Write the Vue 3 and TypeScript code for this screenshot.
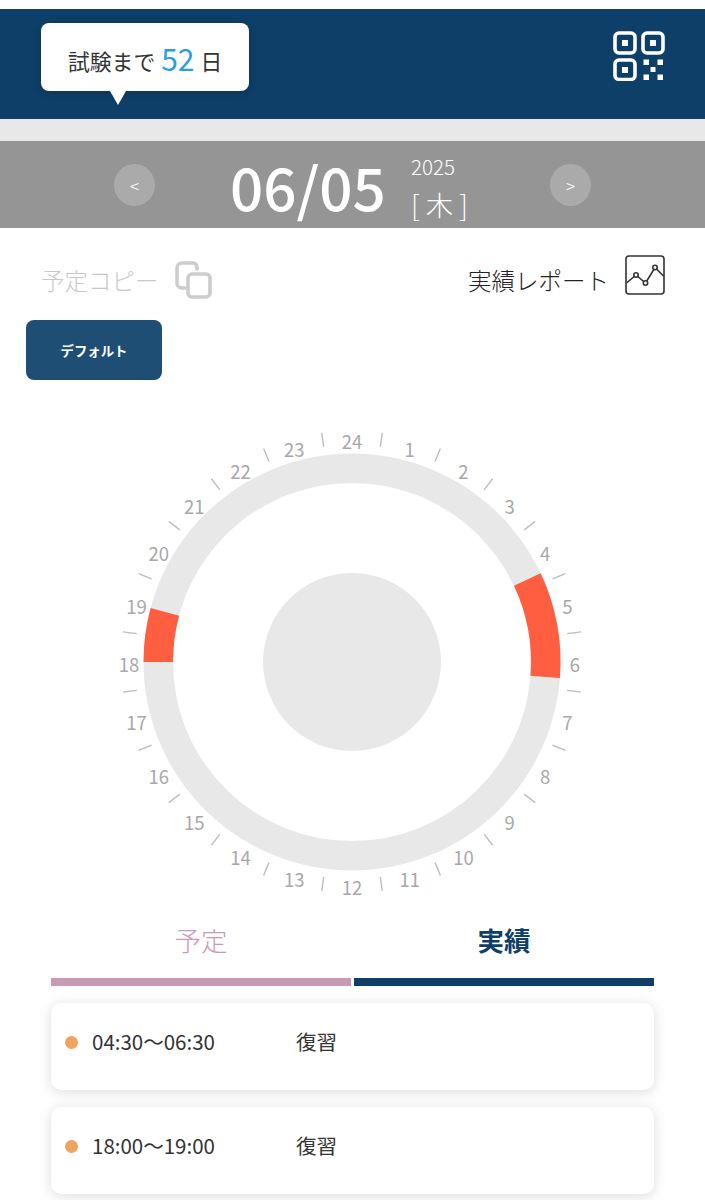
<script setup lang="ts">
const cx = 352
const cy = 240
const rOuter = 208.5
const rInner = 179

function polar(r: number, deg: number): { x: number; y: number } {
  const a = (deg * Math.PI) / 180
  return { x: cx + r * Math.sin(a), y: cy - r * Math.cos(a) }
}

function arc(start: number, end: number): string {
  const a = polar(rOuter, start)
  const b = polar(rOuter, end)
  const c = polar(rInner, end)
  const d = polar(rInner, start)
  return `M${a.x} ${a.y}A${rOuter} ${rOuter} 0 0 1 ${b.x} ${b.y}L${c.x} ${c.y}A${rInner} ${rInner} 0 0 0 ${d.x} ${d.y}Z`
}

const hours = Array.from({ length: 24 }, (_, i) => {
  const h = i + 1
  const deg = h * 15
  const p = polar(223, deg)
  const t1 = polar(217, deg - 7.5)
  const t2 = polar(231, deg - 7.5)
  return { h, x: p.x, y: p.y + 2, t1, t2 }
})

const segments = [arc(64.8, 94.4), arc(270, 285)]
const entries = [
  { time: '04:30〜06:30', label: '復習' },
  { time: '18:00〜19:00', label: '復習' },
]
</script>

<template>
  <div class="page">
    <header class="top">
      <div class="bubble">
        <span>試験まで</span>
        <span class="count">52</span>
        <span>日</span>
      </div>
      <svg class="qr" width="52" height="50" viewBox="0 0 52 50" fill="none">
        <g stroke="#fff" stroke-width="3.6">
          <rect x="2" y="2" width="20" height="20" rx="4" />
          <rect x="30" y="2" width="20" height="20" rx="4" />
          <rect x="2" y="29" width="20" height="19.5" rx="4" />
        </g>
        <g fill="#fff">
          <rect x="9" y="9" width="6" height="6" />
          <rect x="37" y="9" width="6" height="6" />
          <rect x="9" y="36" width="6" height="6" />
          <rect x="30.5" y="28.5" width="5.5" height="5.5" />
          <rect x="44.5" y="28.5" width="5.5" height="5.5" />
          <rect x="37.5" y="36" width="5" height="5" />
          <rect x="30.5" y="43.5" width="5.5" height="5.5" />
          <rect x="44.5" y="43.5" width="5.5" height="5.5" />
        </g>
      </svg>
    </header>
    <div class="strip"></div>

    <section class="datebar">
      <button class="nav">&lt;</button>
      <div class="date">06/05</div>
      <div class="meta">
        <div class="year">2025</div>
        <div class="dow">[ 木 ]</div>
      </div>
      <button class="nav next">&gt;</button>
    </section>

    <section class="tools">
      <div class="tool muted">
        <span>予定コピー</span>
        <svg width="38" height="38" viewBox="0 0 38 38" fill="none" stroke="#cdcdcd" stroke-width="3.6">
          <path d="M10 27H7a5 5 0 0 1-5-5V7a5 5 0 0 1 5-5h11a4 4 0 0 1 4 4v2" stroke-linecap="round" />
          <rect x="13" y="13" width="22" height="23" rx="4" />
        </svg>
      </div>
      <div class="tool">
        <span>実績レポート</span>
        <svg class="chart" width="40" height="40" viewBox="0 0 40 40" fill="none" stroke="#333" stroke-width="1.6">
          <rect x="1" y="1" width="38" height="38" rx="3" />
          <path d="M1.5 28L11 20L20.5 28L30 12.5L38.5 21" />
          <circle cx="11" cy="20" r="2.2" fill="#fff" />
          <circle cx="20.5" cy="28" r="2.2" fill="#fff" />
          <circle cx="30" cy="12.5" r="2.2" fill="#fff" />
        </svg>
      </div>
    </section>

    <button class="preset">デフォルト</button>

    <svg class="dial" width="705" height="480" viewBox="0 0 705 480">
      <circle :cx="cx" :cy="cy" r="193.75" fill="none" stroke="#e8e8e8" stroke-width="29.5" />
      <circle :cx="cx" :cy="cy" r="89" fill="#e8e8e8" />
      <path v-for="d in segments" :key="d" :d="d" fill="#ff5e40" />
      <g v-for="item in hours" :key="item.h">
        <line :x1="item.t1.x" :y1="item.t1.y" :x2="item.t2.x" :y2="item.t2.y" stroke="#bdbdbd" stroke-width="1.4" />
        <text class="hour" :x="item.x" :y="item.y" text-anchor="middle" dominant-baseline="central">{{ item.h }}</text>
      </g>
    </svg>

    <nav class="tabs">
      <div class="tab plan">予定</div>
      <div class="tab actual">実績</div>
    </nav>

    <ul class="list">
      <li v-for="e in entries" :key="e.time" class="card">
        <span class="dot"></span>
        <span class="time">{{ e.time }}</span>
        <span class="label">{{ e.label }}</span>
      </li>
    </ul>
  </div>
</template>

<style>
html, body { background: #fff; }
</style>

<style scoped>
.page {
  width: 705px;
  height: 1200px;
  overflow: hidden;
  padding-top: 9px;
  box-sizing: border-box;
  background: #fff;
  font-family: "Noto Sans CJK JP", "Noto Sans", sans-serif;
  color: #333;
}
.top {
  height: 110px;
  background: #0e3f68;
  display: flex;
  align-items: flex-start;
  justify-content: space-between;
  padding: 14px 40px 0 41px;
  box-sizing: border-box;
}
.bubble {
  position: relative;
  width: 208px;
  height: 68px;
  box-sizing: border-box;
  padding: 6px 0 0 27px;
  background: #fff;
  border-radius: 8px;
  box-shadow: 0 2px 8px rgba(0, 0, 0, 0.2);
  display: flex;
  align-items: center;
  gap: 6px;
  font-size: 21.8px;
  font-weight: 400;
}
.bubble::after {
  content: "";
  position: absolute;
  left: 69px;
  top: 68px;
  border-left: 8px solid transparent;
  border-right: 8px solid transparent;
  border-top: 14px solid #fff;
}
.count {
  color: #2a9fe0;
  font-size: 30px;
  margin-top: -5px;
}
.qr { margin-top: 8px; }
.strip {
  height: 22px;
  background: #e8e8e8;
}
.datebar {
  height: 87px;
  background: #959595;
  display: flex;
  align-items: center;
  padding-left: 114px;
  color: #fff;
}
.nav {
  width: 41px;
  height: 42px;
  padding: 0;
  border: 0;
  border-radius: 50%;
  background: rgba(255, 255, 255, 0.2);
  color: #fff;
  font: 300 17px "Noto Sans CJK JP", sans-serif;
  margin-top: 1px;
}
.date {
  width: 153px;
  margin-left: 75px;
  margin-top: 2px;
  font-size: 58.4px;
  line-height: 70px;
  font-weight: 500;
  white-space: nowrap;
}
.meta {
  width: 59px;
  margin-left: 28px;
  margin-right: 80px;
  margin-top: 8px;
  font-weight: 300;
}
.year { font-size: 20.5px; line-height: 24px; }
.dow { font-size: 27.5px; line-height: 38px; margin-top: 7px; white-space: nowrap; }
.tools {
  height: 92px;
  display: flex;
  justify-content: space-between;
  padding: 27px 40px 0 41px;
  box-sizing: border-box;
}
.tool {
  display: flex;
  align-items: flex-start;
  gap: 16px;
  font-size: 23.5px;
  font-weight: 300;
  line-height: 50px;
  height: 50px;
  color: #222;
}
.tool svg { margin-top: 6px; }
.tool .chart { margin-top: 0; }
.tool.muted { color: #c8c8c8; }
.preset {
  display: block;
  width: 136px;
  height: 60px;
  margin-left: 26px;
  padding: 0;
  border: 0;
  border-radius: 8px;
  background: #1f4e74;
  color: #fff;
  font: 700 13.4px "Noto Sans CJK JP", sans-serif;
}
.dial {
  display: block;
  margin-top: 42px;
}
.hour {
  font-size: 18.5px;
  font-weight: 400;
  fill: #a8a8a8;
}
.tabs {
  display: flex;
  gap: 3px;
  margin: 0 51px;
  margin-top: 10px;
}
.tab {
  flex: 1;
  height: 74px;
  text-align: center;
  font-size: 26.5px;
  line-height: 56px;
  box-sizing: border-box;
  border-bottom: 8px solid;
}
.plan { color: #c89ab4; border-color: #c89ab4; font-weight: 300; }
.actual { color: #0e3f68; border-color: #0e3f68; font-weight: 700; }
.list {
  list-style: none;
  margin: 17px 51px 0;
  padding: 0;
  display: flex;
  flex-direction: column;
  gap: 17px;
}
.card {
  height: 87px;
  box-sizing: border-box;
  padding: 20px 0 0 14px;
  border-radius: 10px;
  background: #fff;
  box-shadow: 0 2px 14px rgba(0, 0, 0, 0.14);
  display: flex;
  align-items: flex-start;
  font-size: 20.5px;
  font-weight: 400;
  line-height: 36px;
}
.dot {
  width: 13px;
  height: 13px;
  margin-top: 12.5px;
  border-radius: 50%;
  background: #f0a35e;
}
.time { width: 204px; margin-left: 14px; white-space: nowrap; }
</style>
